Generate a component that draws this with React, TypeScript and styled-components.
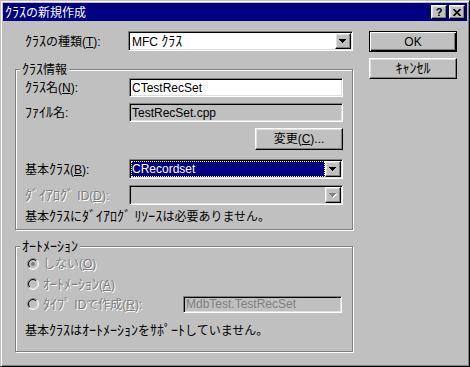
import React from 'react';
import styled, { createGlobalStyle, css } from 'styled-components';

const GlobalStyle = createGlobalStyle`
  html, body {
    margin: 0;
    padding: 0;
    background: #c0c0c0;
  }
  body {
    font-family: "Liberation Sans", "Noto Sans CJK JP", sans-serif;
    font-size: 12px;
    color: #000;
  }
  * {
    box-sizing: border-box;
  }
`;

// Win95 bevels
const raised = css`
  border: 1px solid;
  border-color: #fff #000 #000 #fff;
  box-shadow: inset -1px -1px 0 #808080, inset 1px 1px 0 #dfdfdf;
  background: #c0c0c0;
`;

const sunken = css`
  border: 1px solid;
  border-color: #808080 #fff #fff #808080;
  box-shadow: inset 1px 1px 0 #000, inset -1px -1px 0 #dfdfdf;
`;

const disabledText = css`
  color: #808080;
  text-shadow: 1px 1px 0 #fff;
`;

// half-width katakana runs are a bit wider in the old bitmap font
const HalfKana = styled.span`
  font-size: 14px;
`;

const jp = (text: string) =>
  text
    .split(/([\uFF61-\uFF9F]+)/)
    .map((part, i) =>
      /[\uFF61-\uFF9F]/.test(part) ? <HalfKana key={i}>{part}</HalfKana> : part
    );

const Window = styled.div`
  width: 470px;
  height: 367px;
  background: #c0c0c0;
  border: 1px solid;
  border-color: #c0c0c0 #000 #000 #c0c0c0;
  box-shadow: inset 1px 1px 0 #fff, inset -1px -1px 0 #808080;
  padding: 2px;
  display: flex;
  flex-direction: column;
`;

const TitleBar = styled.div`
  height: 18px;
  background: #000080;
  color: #fff;
  display: flex;
  align-items: center;
  padding: 0 2px 0 2px;
`;

const TitleText = styled.div`
  flex: 1;
  line-height: 16px;
  white-space: nowrap;
`;

const CaptionButton = styled.div`
  ${raised}
  width: 16px;
  height: 14px;
  display: flex;
  align-items: center;
  justify-content: center;
  font-family: "Liberation Sans", sans-serif;
  font-weight: bold;
  font-size: 11px;
  line-height: 12px;
  color: #000;

  & + & {
    margin-left: 2px;
  }
`;

const Body = styled.div`
  display: flex;
  padding: 10px 0 0 12px;
`;

const MainColumn = styled.div`
  width: 338px;
  display: flex;
  flex-direction: column;
`;

const SideColumn = styled.div`
  width: 88px;
  margin-left: 16px;
  display: flex;
  flex-direction: column;
  gap: 6px;
`;

const FieldRow = styled.div<{ $height: number; $mt?: number }>`
  display: flex;
  align-items: center;
  height: ${p => p.$height}px;
  margin-top: ${p => p.$mt ?? 0}px;
`;

const Label = styled.span<{ $width: number; $indent?: number; $disabled?: boolean }>`
  width: ${p => p.$width}px;
  padding-left: ${p => p.$indent ?? 0}px;
  flex-shrink: 0;
  line-height: 14px;
  white-space: nowrap;
  ${p => p.$disabled && disabledText}
`;

const Edit = styled.div<{ $width: number; $height: number; $gray?: boolean; $disabled?: boolean }>`
  ${sunken}
  width: ${p => p.$width}px;
  height: ${p => p.$height}px;
  background: ${p => (p.$gray ? '#c0c0c0' : '#fff')};
  color: ${p => (p.$disabled ? '#808080' : '#000')};
  padding: 0 2px;
  display: flex;
  align-items: center;
  line-height: 14px;
  white-space: nowrap;
  overflow: hidden;
`;

const Combo = styled.div<{ $width: number; $height: number; $disabled?: boolean }>`
  ${sunken}
  width: ${p => p.$width}px;
  height: ${p => p.$height}px;
  background: ${p => (p.$disabled ? '#c0c0c0' : '#fff')};
  padding: 1px;
  display: flex;
`;

const ComboValue = styled.div<{ $selected?: boolean }>`
  flex: 1;
  display: flex;
  align-items: center;
  padding-left: 2px;
  line-height: 14px;
  white-space: nowrap;
  ${p =>
    p.$selected &&
    css`
      background: #000080;
      color: #fff;
      padding-left: 1px;
      outline: 1px dotted #ffff80;
      outline-offset: -1px;
    `}
`;

const DropButton = styled.div`
  ${raised}
  width: 16px;
  display: flex;
  align-items: center;
  justify-content: center;
`;

const PushButton = styled.div<{ $width: number; $height: number; $default?: boolean }>`
  ${raised}
  width: ${p => p.$width}px;
  height: ${p => p.$height}px;
  display: flex;
  align-items: center;
  justify-content: center;
  line-height: 14px;
  white-space: nowrap;
  ${p =>
    p.$default &&
    css`
      border: 1px solid #000;
      box-shadow: inset 1px 1px 0 #fff, inset -1px -1px 0 #000, inset -2px -2px 0 #808080;
    `}
`;

const ButtonRow = styled.div<{ $mt?: number }>`
  display: flex;
  justify-content: flex-end;
  margin-top: ${p => p.$mt ?? 0}px;
`;

const Group = styled.div<{ $height: number; $mt: number; $pt: number }>`
  position: relative;
  margin-top: ${p => p.$mt}px;
  height: ${p => p.$height}px;
  border: 1px solid #808080;
  box-shadow: inset 1px 1px 0 #fff, 1px 1px 0 #fff;
  padding: ${p => p.$pt}px 9px 0 9px;
  display: flex;
  flex-direction: column;
`;

const GroupCaption = styled.span`
  position: absolute;
  top: -8px;
  left: 4px;
  padding: 0 2px;
  background: #c0c0c0;
  line-height: 14px;
  white-space: nowrap;
`;

const Note = styled.div<{ $mt: number }>`
  margin-top: ${p => p.$mt}px;
  line-height: 14px;
  white-space: nowrap;
`;

const RadioRow = styled.div`
  display: flex;
  align-items: center;
  height: 20px;
  padding-left: 2px;
`;

const RadioLabel = styled.label<{ $width?: number }>`
  display: flex;
  align-items: center;
  gap: 4px;
  width: ${p => (p.$width ? `${p.$width}px` : 'auto')};
  flex-shrink: 0;
  line-height: 14px;
  white-space: nowrap;
  ${disabledText}
`;

const Arrow: React.FC<{ disabled?: boolean }> = ({ disabled }) => {
  const d = 'M0 0h7v1h-1v1h-1v1h-1v1h-1v-1h-1v-1h-1v-1h-1z';
  return (
    <svg width="8" height="5" viewBox="0 0 8 5">
      {disabled && <path d={d} fill="#fff" transform="translate(1 1)" />}
      <path d={d} fill={disabled ? '#808080' : '#000'} />
    </svg>
  );
};

const RadioMark: React.FC<{ checked?: boolean; disabled?: boolean }> = ({ checked, disabled }) => {
  const arc = (r: number, topLeft: boolean) => {
    const k = r * Math.SQRT1_2;
    return topLeft
      ? `M${6 - k} ${6 + k}A${r} ${r} 0 0 1 ${6 + k} ${6 - k}`
      : `M${6 + k} ${6 - k}A${r} ${r} 0 0 1 ${6 - k} ${6 + k}`;
  };
  return (
    <svg width="12" height="12" viewBox="0 0 12 12">
      <circle cx="6" cy="6" r="4" fill={disabled ? '#c0c0c0' : '#fff'} />
      <path d={arc(5.5, true)} stroke="#808080" fill="none" />
      <path d={arc(5.5, false)} stroke="#fff" fill="none" />
      <path d={arc(4.5, true)} stroke="#000" fill="none" />
      <path d={arc(4.5, false)} stroke="#dfdfdf" fill="none" />
      {checked && <circle cx="6" cy="6" r="2" fill={disabled ? '#808080' : '#000'} />}
    </svg>
  );
};

const CloseGlyph = () => (
  <svg width="8" height="7" viewBox="0 0 8 7">
    <path d="M0.5 0L7.5 7M7.5 0L0.5 7" stroke="#000" strokeWidth="1.6" />
  </svg>
);

const App: React.FC = () => {
  return (
    <>
      <GlobalStyle />
      <Window>
        <TitleBar>
          <TitleText>{jp('ｸﾗｽの新規作成')}</TitleText>
          <CaptionButton>?</CaptionButton>
          <CaptionButton>
            <CloseGlyph />
          </CaptionButton>
        </TitleBar>

        <Body>
          <MainColumn>
            <FieldRow $height={20}>
              <Label $width={113} $indent={10}>
                {jp('ｸﾗｽの種類')}(<u>T</u>):
              </Label>
              <Combo $width={225} $height={20}>
                <ComboValue>
                  <span>MFC {jp('ｸﾗｽ')}</span>
                </ComboValue>
                <DropButton>
                  <Arrow />
                </DropButton>
              </Combo>
            </FieldRow>

            <Group $mt={18} $height={161} $pt={8}>
              <GroupCaption>{jp('ｸﾗｽ情報')}</GroupCaption>
              <FieldRow $height={19}>
                <Label $width={104}>
                  {jp('ｸﾗｽ名')}(<u>N</u>):
                </Label>
                <Edit $width={214} $height={19}>CTestRecSet</Edit>
              </FieldRow>
              <FieldRow $height={19} $mt={6}>
                <Label $width={104}>{jp('ﾌｧｲﾙ名')}:</Label>
                <Edit $width={214} $height={19} $gray>
                  TestRecSet.cpp
                </Edit>
              </FieldRow>
              <ButtonRow $mt={6}>
                <PushButton $width={88} $height={22}>
                  <span>
                    変更(<u>C</u>)...
                  </span>
                </PushButton>
              </ButtonRow>
              <FieldRow $height={20} $mt={9}>
                <Label $width={104}>
                  {jp('基本ｸﾗｽ')}(<u>B</u>):
                </Label>
                <Combo $width={214} $height={20}>
                  <ComboValue $selected>CRecordset</ComboValue>
                  <DropButton>
                    <Arrow />
                  </DropButton>
                </Combo>
              </FieldRow>
              <FieldRow $height={20} $mt={6}>
                <Label $width={104} $disabled>
                  {jp('ﾀﾞｲｱﾛｸﾞ')} ID(<u>D</u>):
                </Label>
                <Combo $width={214} $height={20} $disabled>
                  <ComboValue />
                  <DropButton>
                    <Arrow disabled />
                  </DropButton>
                </Combo>
              </FieldRow>
              <Note $mt={4}>{jp('基本ｸﾗｽにﾀﾞｲｱﾛｸﾞ ﾘｿｰｽは必要ありません。')}</Note>
            </Group>

            <Group $mt={16} $height={106} $pt={7}>
              <GroupCaption>{jp('ｵｰﾄﾒｰｼｮﾝ')}</GroupCaption>
              <RadioRow>
                <RadioLabel>
                  <RadioMark checked disabled />
                  <span>
                    しない(<u>O</u>)
                  </span>
                </RadioLabel>
              </RadioRow>
              <RadioRow>
                <RadioLabel>
                  <RadioMark disabled />
                  <span>
                    {jp('ｵｰﾄﾒｰｼｮﾝ')}(<u>A</u>)
                  </span>
                </RadioLabel>
              </RadioRow>
              <RadioRow>
                <RadioLabel $width={156}>
                  <RadioMark disabled />
                  <span>
                    {jp('ﾀｲﾌﾟ')} IDで作成(<u>R</u>):
                  </span>
                </RadioLabel>
                <Edit $width={159} $height={17} $gray $disabled>
                  MdbTest.TestRecSet
                </Edit>
              </RadioRow>
              <Note $mt={9}>{jp('基本ｸﾗｽはｵｰﾄﾒｰｼｮﾝをｻﾎﾟｰﾄしていません。')}</Note>
            </Group>
          </MainColumn>

          <SideColumn>
            <PushButton $width={88} $height={21} $default>
              OK
            </PushButton>
            <PushButton $width={88} $height={21}>
              <span>{jp('ｷｬﾝｾﾙ')}</span>
            </PushButton>
          </SideColumn>
        </Body>
      </Window>
    </>
  );
};

export default App;
